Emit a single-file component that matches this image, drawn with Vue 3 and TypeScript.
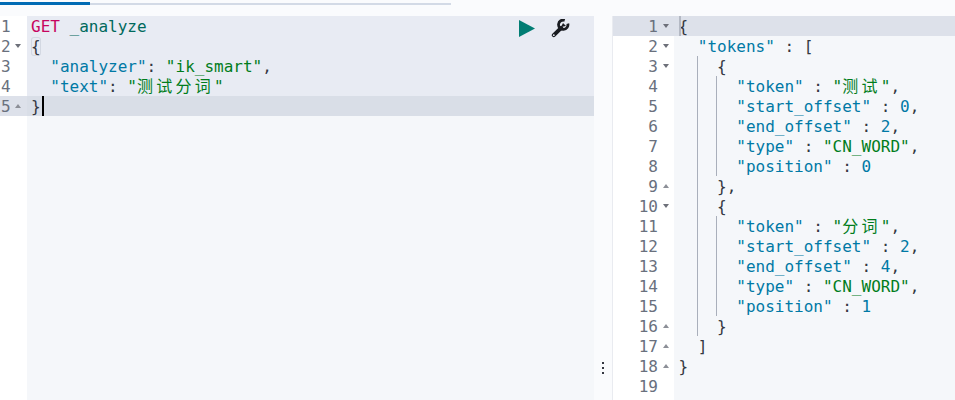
<script setup lang="ts">
type Tok = { t: string; c?: string };
type Row = { n: number; fold?: 'd' | 'u'; toks: Tok[]; guides?: number; indent?: number };
const s = (t: string, c?: string): Tok => ({ t, c });

const leftRows: Row[] = [
  { n: 1, toks: [s('GET', 'method'), s(' '), s('_analyze', 'url')] },
  { n: 2, fold: 'd', toks: [s('{', 'paren match')] },
  { n: 3, toks: [s('  '), s('"analyzer"', 'key'), s(': '), s('"ik_smart"', 'str'), s(',')] },
  { n: 4, toks: [s('  '), s('"text"', 'key'), s(': '), s('"', 'str'), s('测试分词', 'str cjk'), s('"', 'str')] },
  { n: 5, fold: 'u', toks: [s('}', 'paren')] },
];

const entry = (name: string, a: number, b: number, pos: number): Tok[][] => [
  [s('"token"', 'key'), s(' : '), s('"', 'str'), s(name, 'str cjk'), s('"', 'str'), s(',')],
  [s('"start_offset"', 'key'), s(' : '), s(String(a), 'num'), s(',')],
  [s('"end_offset"', 'key'), s(' : '), s(String(b), 'num'), s(',')],
  [s('"type"', 'key'), s(' : '), s('"CN_WORD"', 'str'), s(',')],
  [s('"position"', 'key'), s(' : '), s(String(pos), 'num')],
];
const e1 = entry('测试', 0, 2, 0);
const e2 = entry('分词', 2, 4, 1);

const rightRows: Row[] = [
  { n: 1, fold: 'd', toks: [s('{', 'paren')], guides: 0, indent: 0 },
  { n: 2, fold: 'd', toks: [s('"tokens"', 'key'), s(' : '), s('[', 'paren')], guides: 0, indent: 2 },
  { n: 3, fold: 'd', toks: [s('{', 'paren')], guides: 1, indent: 4 },
  ...e1.map((toks, i) => ({ n: 4 + i, toks, guides: 2, indent: 6 })),
  { n: 9, fold: 'u', toks: [s('}', 'paren'), s(',')], guides: 1, indent: 4 },
  { n: 10, fold: 'd', toks: [s('{', 'paren')], guides: 1, indent: 4 },
  ...e2.map((toks, i) => ({ n: 11 + i, toks, guides: 2, indent: 6 })),
  { n: 16, fold: 'u', toks: [s('}', 'paren')], guides: 1, indent: 4 },
  { n: 17, fold: 'u', toks: [s(']', 'paren')], guides: 0, indent: 2 },
  { n: 18, fold: 'u', toks: [s('}', 'paren')], guides: 0, indent: 0 },
  { n: 19, toks: [], guides: 0, indent: 0 },
];
</script>

<template>
  <div class="page">
    <div class="tabs"><div class="tab-active"></div></div>
    <div class="panes">
      <section class="editor left">
        <div class="gutter">
          <div v-for="r in leftRows" :key="r.n" class="gcell" :class="{ active: r.n === 5 }">
            <span class="lnum">{{ r.n }}</span>
            <span class="fold" :class="r.fold"></span>
          </div>
        </div>
        <div class="code">
          <div v-for="r in leftRows" :key="r.n" class="line" :class="r.n === 5 ? 'active' : 'sel'">
            <span v-for="(k, i) in r.toks" :key="i" :class="k.c">{{ k.t }}</span><span v-if="r.n === 5" class="cursor"></span>
          </div>
          <div class="actions">
            <svg class="play" width="16" height="17" viewBox="0 0 16 17"><path d="M0 0L16 8.5L0 17Z" fill="#017d73" /></svg>
            <svg class="wrench" width="19" height="19" viewBox="0 0 19 19">
              <path d="M2.8 16.200L10.200 8.800" stroke="#1a1c21" stroke-width="4" stroke-linecap="round" fill="none" />
              <path d="M16.800 4.600A4.700 4.700 0 1 1 13.700 1.300" stroke="#1a1c21" stroke-width="2.800" fill="none" />
              <path d="M10 8L12 4L15 7Z" fill="#1a1c21" />
              <circle cx="2.800" cy="16.200" r="0.900" fill="#e8ebf3" />
            </svg>
          </div>
        </div>
      </section>
      <div class="splitter"><span class="dots"><i></i><i></i><i></i></span></div>
      <section class="editor right">
        <div class="gutter">
          <div v-for="r in rightRows" :key="r.n" class="gcell" :class="{ active: r.n === 1 }">
            <span class="lnum">{{ r.n }}</span>
            <span class="fold" :class="r.fold"></span>
          </div>
        </div>
        <div class="code">
          <div v-for="r in rightRows" :key="r.n" class="line" :class="{ active: r.n === 1 }">
            <i v-if="r.guides && r.guides >= 1" class="guide g1"></i>
            <i v-if="r.guides === 2" class="guide g2"></i>
            <i v-if="r.n === 1" class="caret"></i>
            <span class="pad" :style="{ width: (r.indent ?? 0) * 9.63 + 'px' }"></span>
            <span v-for="(k, i) in r.toks" :key="i" :class="k.c">{{ k.t }}</span>
          </div>
        </div>
      </section>
    </div>
  </div>
</template>

<style>
html, body { margin: 0; padding: 0; background: #fafbfd; }
</style>

<style scoped>
.page {
  width: 955px;
  height: 400px;
  overflow: hidden;
  background: #fafbfd;
  display: flex;
  flex-direction: column;
}
.tabs {
  width: 451px;
  height: 2px;
  margin-top: 3px;
  background: #d3dae6;
  flex: none;
}
.tab-active { width: 90px; height: 3px; margin-top: -1px; background: #006bb4; }
.panes {
  display: flex;
  margin-top: 11px;
  flex: 1;
  min-height: 0;
  font: 16px/22px "DejaVu Sans Mono", "Noto Sans CJK SC", monospace;
  color: #343741;
}
.editor { display: flex; min-width: 0; }
.left { width: 594px; flex: none; }
.right { flex: 1; background: #f5f7fa; border-left: 1px solid #e9ebf0; }
.splitter {
  width: 18px;
  flex: none;
  position: relative;
  background: #fafbfd;
}
.dots {
  position: absolute;
  left: 8px;
  top: 346px;
  display: flex;
  flex-direction: column;
  gap: 3px;
}
.dots i { display: block; width: 2px; height: 2px; background: #343741; }
.gutter { flex: none; background: #fff; }
.left .gutter { width: 27px; }
.right .gutter { width: 61px; }
.gcell { height: 20px; position: relative; }
.gcell .lnum { position: absolute; white-space: nowrap; color: #69707d; }
.left .gcell .lnum { left: 1px; }
.right .gcell .lnum { right: 16px; }
.gcell.active { background: #dde1ea; }
.fold { position: absolute; top: 8px; width: 0; height: 0; }
.left .fold { left: 15px; }
.right .fold { right: 5px; }
.fold.d { border: 3px solid transparent; border-top: 4px solid #6d7079; border-bottom: 0; }
.fold.u { border: 3px solid transparent; border-bottom: 4px solid #8c8f97; border-top: 0; }
.left .code { flex: 1; background: #f5f7fa; position: relative; }
.right .code { flex: 1; }
.line { height: 20px; white-space: pre; position: relative; padding-left: 4px; }
.right .line { padding-left: 4.500px; }
.line.sel { background: #e8ebf3; }
.line.active { background: #d9dee7; }
.right .line.active { background: #dde1ea; }
.pad { display: inline-block; }
.guide { position: absolute; top: 0; bottom: 0; width: 1px; background: #a9afbb; }
.g1 { left: 23px; }
.g2 { left: 42px; }
.caret { position: absolute; left: 5px; top: 0; bottom: 0; width: 2px; background: #b4b9c4; }
.cursor {
  display: inline-block;
  width: 2px;
  height: 20px;
  vertical-align: top;
  background: #000;
  margin-left: 1px;
}
.method { color: #c7055f; }
.url { color: #00695c; }
.key { color: #0079a5; }
.str { color: #017d1c; }
.num { color: #0079a5; }
.paren { color: #343741; }
.cjk { letter-spacing: 3.26px; }
.match { box-shadow: inset 0 0 0 1px #d3d8e2; border-radius: 3px; }
.actions {
  position: absolute;
  top: 3px;
  right: 24px;
  display: flex;
  align-items: center;
  gap: 16px;
}
svg { display: block; }
</style>
